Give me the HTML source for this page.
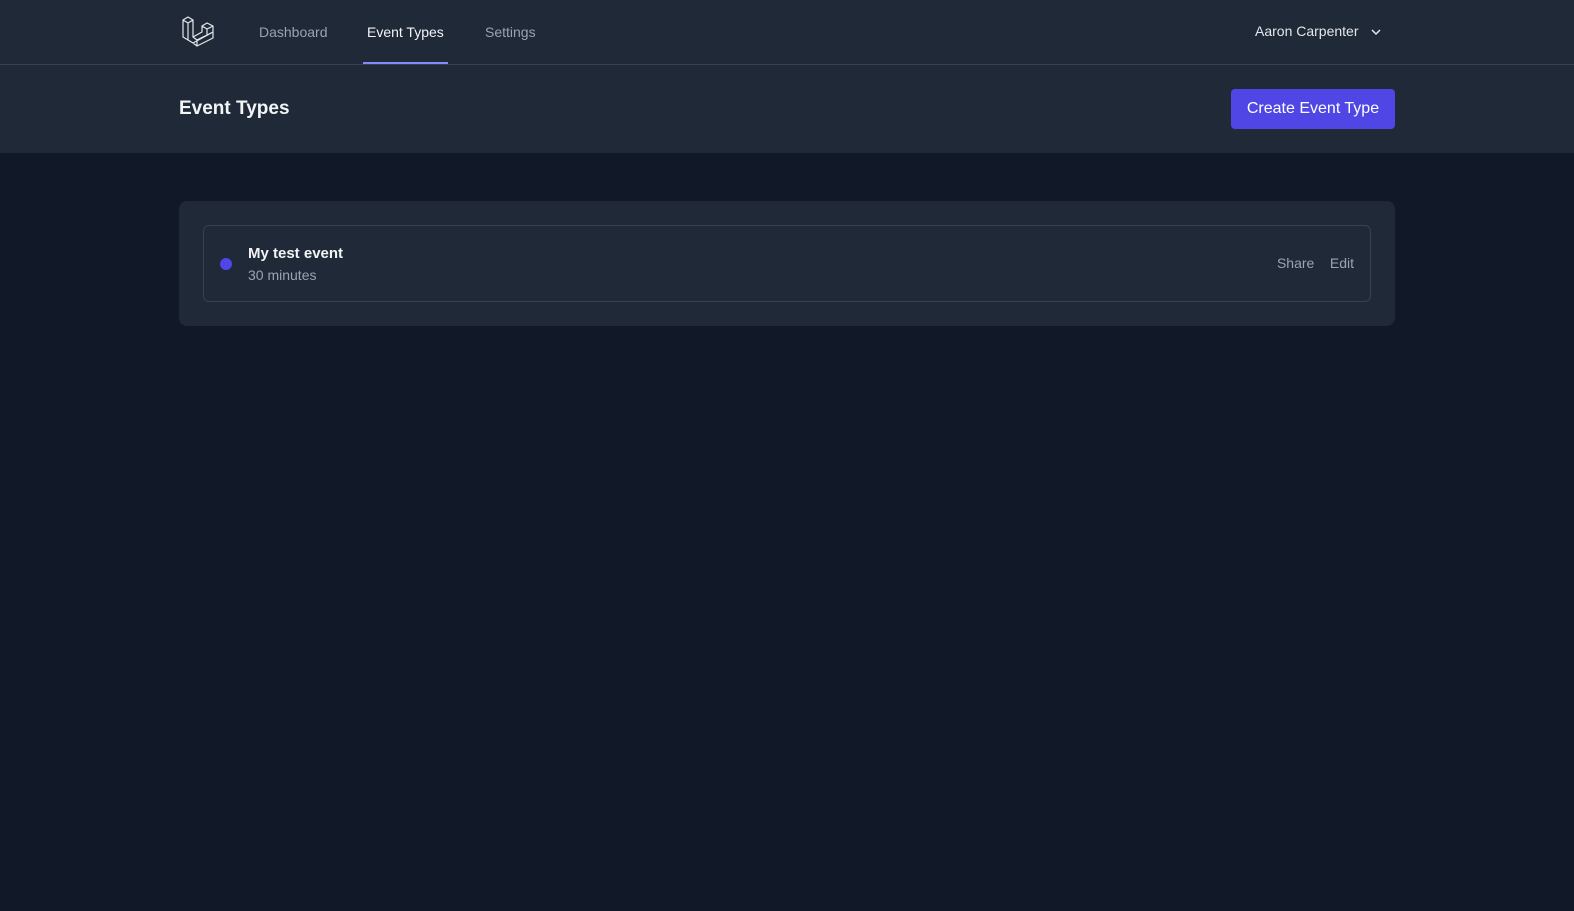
<!DOCTYPE html>
<html><head><style>
*{box-sizing:border-box;margin:0;padding:0}
body{width:1574px;height:911px;background:#111827;font-family:"Liberation Sans",sans-serif;overflow:hidden;position:relative}
.nav{position:absolute;top:0;left:0;right:0;height:65px;background:#1f2937;border-bottom:1px solid #374151}
.nav a{position:absolute;top:24px;font-size:14px;color:#9ca3af}
.hdr{position:absolute;top:65px;left:0;right:0;height:88px;background:#1f2937}
.card{position:absolute;left:179px;top:201px;width:1216px;height:125px;background:#1f2937;border-radius:8px}
.item{position:absolute;left:24px;top:24px;right:24px;height:77px;border:1px solid #374151;border-radius:6px}
</style></head><body>
<div class="nav">
<svg style="position:absolute;left:182px;top:15px" width="33" height="33" viewBox="0 0 33 33" fill="none" stroke="#e5e7eb" stroke-width="1.2" stroke-linejoin="round">
<path d="M1 5 L6 2 L11 5 L11 22 L20 17 L20 11 L25 8 L31 11 L31 17 L11 28 L1 22 Z M1 5 L6 8 L11 5 M6 8 L6 25 M11 22 L15 25 L15 31 L11 28 M15 25 L31 17 M15 31 L31 23 L31 17 M20 11 L25 14 L31 11 M25 14 L25 20"/>
</svg>
<a style="left:259px">Dashboard</a>
<a style="left:367px;color:#f3f4f6">Event Types</a>
<div style="position:absolute;left:363px;top:62px;width:85px;height:2px;background:#818cf8"></div>
<a style="left:485px">Settings</a>
<a style="left:1255px;top:23px;color:#e5e7eb">Aaron Carpenter</a>
<svg style="position:absolute;left:1371px;top:28px" width="10" height="8" viewBox="0 0 10 8"><path d="M1 2 L5 6 L9 2" fill="none" stroke="#e5e7eb" stroke-width="1.5"/></svg>
</div>
<div class="hdr">
<div style="position:absolute;left:179px;top:33px;font-size:19px;font-weight:bold;color:#f3f4f6">Event Types</div>
<div style="position:absolute;left:1231px;top:24px;width:164px;height:40px;background:#4f46e5;border-radius:4px;color:#fff;font-size:16px;text-align:center;line-height:40px">Create Event Type</div>
</div>
<div class="card"><div class="item">
<div style="position:absolute;left:16px;top:32px;width:12px;height:12px;border-radius:50%;background:#4f46e5"></div>
<div style="position:absolute;left:44px;top:19px;font-size:15px;font-weight:bold;color:#f3f4f6">My test event</div>
<div style="position:absolute;left:44px;top:41px;font-size:14px;color:#9ca3af">30 minutes</div>
<div style="position:absolute;right:16px;top:29px;font-size:14px;color:#9ca3af">Share&nbsp;&nbsp;&nbsp;&nbsp;Edit</div>
</div></div>
</body></html>
